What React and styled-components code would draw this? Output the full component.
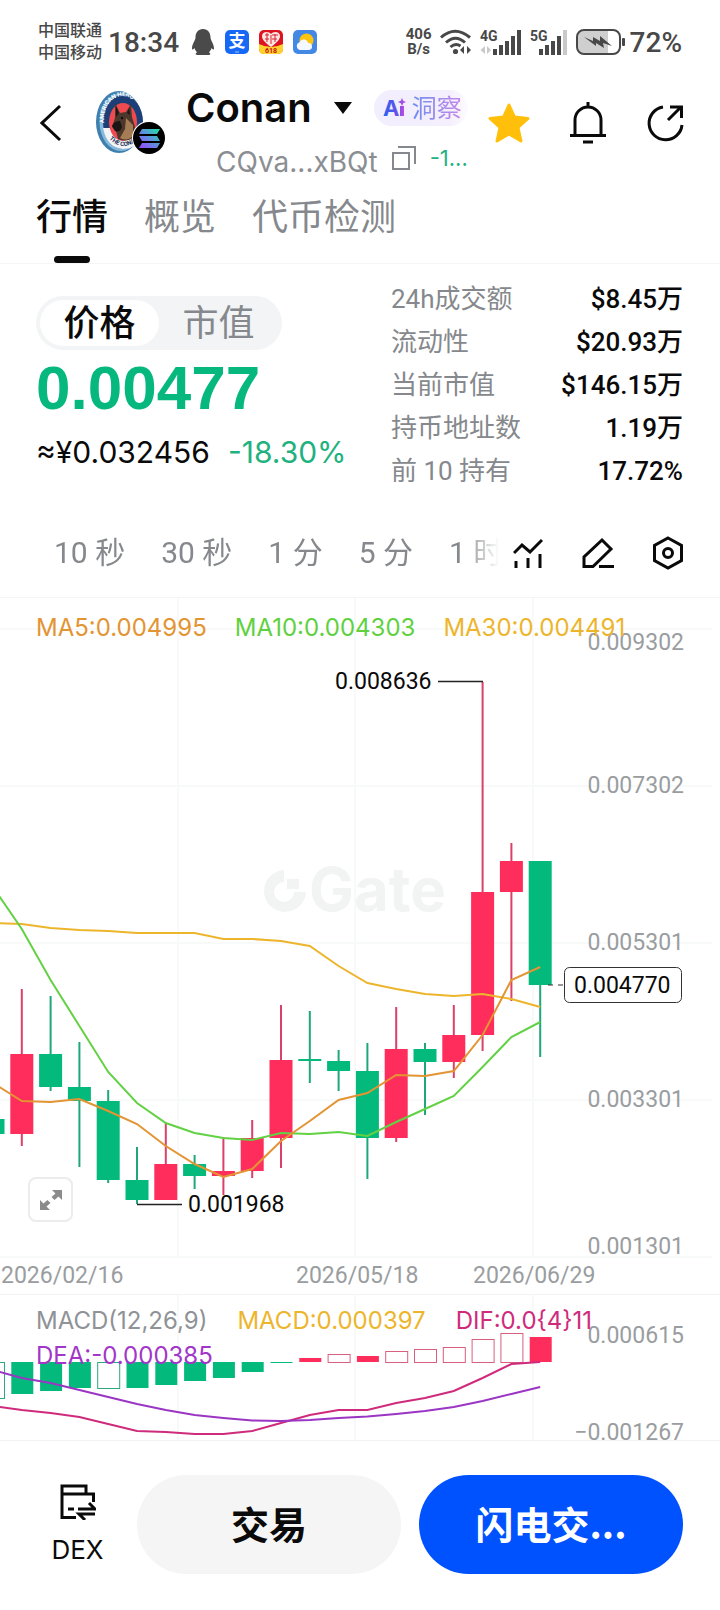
import React, { useState } from 'react';
import styled, { createGlobalStyle } from 'styled-components';

const candles = [
  { high: 521, top: 521, bottom: 536, low: 536, up: false },
  { high: 391, top: 456, bottom: 536, low: 548, up: true },
  { high: 398, top: 456, bottom: 489, low: 493, up: false },
  { high: 444, top: 489, bottom: 503, low: 569, up: false },
  { high: 492, top: 503, bottom: 582, low: 585, up: false },
  { high: 549, top: 582, bottom: 602, low: 606, up: false },
  { high: 525, top: 566, bottom: 602, low: 602, up: true },
  { high: 557, top: 566, bottom: 578, low: 591, up: false },
  { high: 539, top: 573, bottom: 578, low: 597, up: true },
  { high: 522, top: 540, bottom: 573, low: 580, up: true },
  { high: 407, top: 462, bottom: 540, low: 570, up: true },
  { high: 413, top: 461, bottom: 463, low: 485, up: false },
  { high: 452, top: 463, bottom: 473, low: 493, up: false },
  { high: 445, top: 473, bottom: 540, low: 581, up: false },
  { high: 409, top: 451, bottom: 540, low: 544, up: true },
  { high: 445, top: 451, bottom: 464, low: 517, up: false },
  { high: 407, top: 437, bottom: 464, low: 480, up: true },
  { high: 84, top: 294, bottom: 437, low: 453, up: true },
  { high: 245, top: 263, bottom: 294, low: 403, up: true },
  { high: 263, top: 263, bottom: 387, low: 459, up: false },
];

const averages = [
  { color: '#edb52c', points: [325, 326, 330, 332, 333, 335, 335, 335, 341, 341, 343, 348, 368, 385, 391, 396, 398, 396, 401, 409] },
  { color: '#62d143', points: [289, 331, 382, 428, 474, 505, 525, 535, 540, 542, 535, 536, 534, 538, 524, 511, 498, 469, 439, 424] },
  { color: '#e39433', points: [485, 503, 504, 501, 513, 526, 548, 566, 579, 571, 543, 523, 502, 495, 477, 478, 473, 437, 382, 369] },
];

const macdBars = [
  { y: 103, hollow: true }, { y: 99 }, { y: 96 }, { y: 93 }, { y: 93, hollow: true },
  { y: 93 }, { y: 90 }, { y: 86 }, { y: 83 }, { y: 77 }, { y: 68 },
  { y: 63 }, { y: 59, hollow: true }, { y: 61 }, { y: 56, hollow: true },
  { y: 54, hollow: true }, { y: 52, hollow: true }, { y: 44, hollow: true },
  { y: 38, hollow: true }, { y: 42 },
];

const macdLines = [
  { color: '#cf2b7c', points: [111, 115, 118, 122, 129, 136, 137, 139, 139, 136, 128, 120, 115, 115, 108, 103, 96, 83, 69, 67] },
  { color: '#9a35c4', points: [75, 83, 88, 95, 102, 109, 115, 120, 123, 125.5, 126, 125, 123, 121.5, 119, 116, 112, 106, 99, 92] },
];

const priceAxis = [
  { label: '0.009302', line: 31, text: 52 },
  { label: '0.007302', line: 188, text: 195 },
  { label: '0.005301', line: 345, text: 352 },
  { label: '0.003301', line: 502, text: 509 },
  { label: '0.001301', line: 659, text: 656 },
];

const stats = [
  { label: '24h成交额', value: '$8.45万' },
  { label: '流动性', value: '$20.93万' },
  { label: '当前市值', value: '$146.15万' },
  { label: '持币地址数', value: '1.19万' },
  { label: '前 10 持有', value: '17.72%' },
];

const columns = [178, 355, 533];
const tabs = ['行情', '概览', '代币检测'];
const frames = ['10 秒', '30 秒', '1 分', '5 分', '1 时'];

const xAt = (i) => -7 + i * 28.8;
const toPoints = (values) => values.map((y, i) => `${xAt(i)},${y}`).join(' ');

function StatusBar() {
  return (
    <Status>
      <Carriers>
        <span>中国联通</span>
        <span>中国移动</span>
      </Carriers>
      <Clock>18:34</Clock>
      <StatusApps>
        <svg width="24" height="28" viewBox="0 0 24 28" fill="#4a4a4a">
          <path d="M12 1C7 1 4.500 5 4.500 9.500C4.500 12 1 16 1 20.500C1 22 1.800 22 3.500 20C4 22 5 23.500 6.200 24.300C4.500 25 4 27 6 27H18C20 27 19.500 25 17.800 24.300C19 23.500 20 22 20.500 20C22.200 22 23 22 23 20.500C23 16 19.500 12 19.500 9.500C19.500 5 17 1 12 1Z" />
        </svg>
        <svg width="24" height="24" viewBox="0 0 24 24">
          <rect width="24" height="24" rx="5" fill="#1769f5" />
          <text x="12" y="17" fontSize="17" fontWeight="700" fill="#fff" textAnchor="middle">支</text>
          <path d="M10 22h4" stroke="#9cc4ff" strokeWidth="1" />
        </svg>
        <svg width="24" height="24" viewBox="0 0 24 24">
          <rect width="24" height="24" rx="5" fill="#dc1420" />
          <path d="M0 14Q12 20 24 14V19Q24 24 19 24H5Q0 24 0 19Z" fill="#ffd22e" />
          <path d="M12 17C5 12 3 9 3 6C3 1 10 1 12 4C14 1 21 1 21 6C21 9 19 12 12 17Z" fill="#ffe6e2" />
          <path d="M6 5h4M8 3v9M13 5h6M16 4v8M6 9h4M13 9h5M12 5v9" stroke="#d8202c" strokeWidth="1" />
          <text x="12" y="23" fontSize="7" fontWeight="700" fill="#c21219" textAnchor="middle">618</text>
        </svg>
        <svg width="24" height="24" viewBox="0 0 24 24">
          <rect width="24" height="24" rx="5" fill="#4488e6" />
          <circle cx="13.500" cy="10.500" r="7" fill="#ffc40f" />
          <path d="M7 20a4 4 0 0 1-.5-7.700A4.500 4.500 0 0 1 15 13a3.500 3.500 0 0 1 1 7Z" fill="#f4f8ff" />
        </svg>
      </StatusApps>
      <Signals>
        <NetSpeed>
          <span>406</span>
          <span>B/s</span>
        </NetSpeed>
        <svg width="32" height="26" viewBox="0 0 32 26" fill="none" stroke="#484848" strokeWidth="3">
          <path d="M1 8.500Q15 -4 30 8.500M6 13.500Q15.500 5 25 13.500M10.500 18Q15.500 13.500 20.500 17" />
          <circle cx="15.500" cy="22.500" r="2.600" fill="#484848" stroke="none" />
          <path d="M24 17v8l-4-4ZM27 17v8l4-4Z" fill="#484848" stroke="none" />
        </svg>
        <svg width="42" height="26" viewBox="0 0 42 26" fill="#484848">
          <text x="0" y="12" fontSize="14" fontWeight="700">4G</text>
          <path d="M5 17v8l-4.500-4ZM7 17v8l4-4Z" fill="#c9c9c9" />
          <path d="M13 20h4v6h-4ZM19 16h4v10h-4ZM25 12h4v14h-4ZM31 7h4v19h-4ZM37 1h4v25h-4Z" />
        </svg>
        <svg width="38" height="26" viewBox="0 0 38 26" fill="#484848">
          <text x="0" y="12" fontSize="14" fontWeight="700">5G</text>
          <path d="M9 20h4v6H9ZM15 16h4v10h-4ZM21 12h4v14h-4ZM27 7h4v19h-4Z" />
          <path d="M33 1h4v25h-4Z" fill="#c9c9c9" />
        </svg>
        <svg width="50" height="26" viewBox="0 0 50 26">
          <path d="M8 2h24v22H8q-6 0-6-6V8q0-6 6-6Z" fill="#cfcfcf" />
          <rect x="1" y="1" width="43" height="24" rx="7" fill="none" stroke="#484848" strokeWidth="2" />
          <rect x="46" y="9" width="3" height="8" rx="1" fill="#484848" />
          <path d="M8 8L17 12L17 8L24 12L24 7L36 17L27 14L28 19L20 14L20 17Z" fill="#484848" />
        </svg>
        <Battery>72%</Battery>
      </Signals>
    </Status>
  );
}

function TokenAvatar() {
  return (
    <svg width="70" height="64" viewBox="0 0 70 64">
      <defs>
        <linearGradient id="sol" x1="0" y1="1" x2="1" y2="0">
          <stop offset="0" stopColor="#9945ff" />
          <stop offset="0.500" stopColor="#5f8fe0" />
          <stop offset="1" stopColor="#19e6a0" />
        </linearGradient>
        <path id="rim" d="M10 43C3 18 15 5 27 5C38 5 48 20 45 44" />
        <path id="foot" d="M10 44Q26 65 45 46" />
      </defs>
      <ellipse cx="23" cy="31" rx="23" ry="31" fill="#3f7fae" />
      <ellipse cx="25" cy="31" rx="21.500" ry="29" fill="#86b9dc" />
      <ellipse cx="27" cy="31" rx="20" ry="27" fill="#1d3f77" />
      <path d="M7 37H47Q44 58 27 58Q11 57 7 37Z" fill="#f2f4f6" />
      <ellipse cx="27" cy="31" rx="14" ry="19" fill="#ee4a50" />
      <path d="M19 12L24 22L30 21L35 13L36 26L39 36L38 46Q31 52 22 48L20 40L16 36L19 27Z" fill="#4b372b" />
      <path d="M30 27L37 34L37 45Q31 51 24 47L29 38Z" fill="#a67c55" />
      <path d="M20 15L23 22L20 26ZM33 17L34 24L31 22Z" fill="#1e1714" />
      <path d="M16 35Q18 30 24 30L26 36Q24 42 19 40Z" fill="#1b1513" />
      <circle cx="26" cy="27" r="1.200" fill="#120d0b" />
      <AvatarText fill="#fff"><textPath href="#rim" startOffset="11">AMERICAN HERO</textPath></AvatarText>
      <AvatarText fill="#1d2f57"><textPath href="#foot" startOffset="5">THE CONAN</textPath></AvatarText>
      <circle cx="53" cy="47" r="17" fill="#fff" />
      <circle cx="53" cy="47" r="16" fill="#000" />
      <path d="M46 38h18l-3 5H43ZM43 45h18l3 5H46ZM46 52h18l-3 5H43Z" fill="url(#sol)" />
    </svg>
  );
}

function Header() {
  return (
    <TokenHeader>
      <BackButton aria-label="返回">
        <svg width="22" height="38" viewBox="0 0 22 38" fill="none" stroke="#0a0a0a" strokeWidth="3">
          <path d="M20 2L2 19L20 36" />
        </svg>
      </BackButton>
      <TokenAvatar />
      <TokenTitle>
        <NameRow>
          <TokenName>Conan</TokenName>
          <svg width="18" height="12" viewBox="0 0 18 12"><path d="M0 0H18L9 12Z" fill="#0a0a0a" /></svg>
          <InsightButton>
            <svg width="24" height="28" viewBox="0 0 24 28">
              <defs>
                <linearGradient id="ai" x1="0" y1="0" x2="24" y2="0" gradientUnits="userSpaceOnUse">
                  <stop offset="0" stopColor="#2563f0" />
                  <stop offset="0.600" stopColor="#6a50e8" />
                  <stop offset="1" stopColor="#e04be0" />
                </linearGradient>
              </defs>
              <text x="0" y="22" fontFamily="Inter" fontSize="22" fontWeight="700" fill="url(#ai)">A</text>
              <path d="M17 12h4v10h-4ZM19 4l1.200 2.800L23 8l-2.800 1.200L19 12l-1.200-2.800L15 8l2.800-1.200Z" fill="url(#ai)" />
            </svg>
            <InsightText>洞察</InsightText>
          </InsightButton>
        </NameRow>
        <AddressRow>
          <Address>CQva...xBQt</Address>
          <IconButton aria-label="复制地址">
            <svg width="24" height="32" viewBox="0 0 24 32" fill="none" stroke="#85888c" strokeWidth="2">
              <path d="M1 7H17V23H1ZM6 1H23V18" />
            </svg>
          </IconButton>
          <AgeText>-1...</AgeText>
        </AddressRow>
      </TokenTitle>
      <HeaderActions>
        <IconButton aria-label="收藏">
          <svg width="42" height="40" viewBox="0 0 42 40" fill="#ffbf0a" stroke="#ffbf0a" strokeWidth="3" strokeLinejoin="round">
            <path d="M21 2L26.500 14L40 15.500L30 24.500L33 38L21 31L9 38L12 24.500L2 15.500L15.500 14Z" />
          </svg>
        </IconButton>
        <IconButton aria-label="提醒">
          <svg width="36" height="42" viewBox="0 0 36 42" fill="none" stroke="#0a0a0a" strokeWidth="3">
            <path d="M5 33V18A13 13 0 0 1 31 18V33M0 33.500H36M18 0V5M13 40H23" />
          </svg>
        </IconButton>
        <IconButton aria-label="分享">
          <svg width="38" height="38" viewBox="0 0 38 38" fill="none" stroke="#0a0a0a" strokeWidth="3">
            <path d="M17 3A16.500 16.500 0 1 0 36 21M22 16L35 3M24 3H35.500V14" />
          </svg>
        </IconButton>
      </HeaderActions>
    </TokenHeader>
  );
}

function PriceChart() {
  return (
    <Panel>
      <Drawing viewBox="0 0 720 696">
        {priceAxis.map((tick) => (
          <GridLine key={tick.label} x1="0" x2="712" y1={tick.line} y2={tick.line} />
        ))}
        {columns.map((x) => (
          <GridLine key={x} x1={x} x2={x} y1="0" y2="659" />
        ))}
        <g fill="#f2f4f4">
          <path d="M284 272A21 21 0 1 0 306 294H294A10 10 0 1 1 284 284Z" />
          <path d="M287 281H299V291H287Z" />
          <Watermark x="309" y="313">Gate</Watermark>
        </g>
        {priceAxis.map((tick) => (
          <AxisText key={tick.label} x="684" y={tick.text} textAnchor="end">{tick.label}</AxisText>
        ))}
        {candles.map((c, i) => (
          <g key={i}>
            <path d={`M${xAt(i)} ${c.high}V${c.low}`} stroke={c.up ? '#db4068' : '#1fa67c'} strokeWidth="2" />
            <rect x={xAt(i) - 11.5} y={c.top} width="23" height={c.bottom - c.top} fill={c.up ? '#ff2d5b' : '#04b97c'} />
          </g>
        ))}
        {averages.map((line) => (
          <Curve key={line.color} points={toPoints(line.points)} stroke={line.color} />
        ))}
        <path d="M438 83.500H483M137 606.500H182" stroke="#222" strokeWidth="1.500" />
        <path d="M548 387H564" stroke="#333" strokeWidth="1" strokeDasharray="5 5" />
        <rect x="564.500" y="369.500" width="117" height="35" rx="5" fill="#fff" stroke="#333" />
        <MarkText x="574" y="395">0.004770</MarkText>
        <MarkText x="335" y="91">0.008636</MarkText>
        <MarkText x="188" y="614">0.001968</MarkText>
        <AxisText x="1" y="685">2026/02/16</AxisText>
        <AxisText x="296" y="685">2026/05/18</AxisText>
        <AxisText x="473" y="685">2026/06/29</AxisText>
      </Drawing>
      <Legend $top={12} $gap={28}>
        <LegendItem $color="#e39433">MA5:0.004995</LegendItem>
        <LegendItem $color="#5fd13f">MA10:0.004303</LegendItem>
        <LegendItem $color="#edb52c">MA30:0.004491</LegendItem>
      </Legend>
      <ExpandButton aria-label="全屏">
        <svg width="24" height="24" viewBox="0 0 24 24" fill="#8b8b8b">
          <path d="M13 2H23V12L19.500 8.500L15.500 12L12.500 9L16.500 5.500ZM1 12L4.500 15.500L8.500 12L11.500 15L7.500 18.500L11 22H1Z" />
        </svg>
      </ExpandButton>
    </Panel>
  );
}

function MacdChart() {
  return (
    <Panel>
      <Drawing viewBox="0 0 720 145">
        {columns.map((x) => (
          <GridLine key={x} x1={x} x2={x} y1="0" y2="145" />
        ))}
        {macdBars.map((bar, i) => {
          const up = bar.y < 67;
          const y = up ? bar.y : 67;
          const h = Math.max(Math.abs(bar.y - 67), 1);
          const color = up ? '#ff2d5b' : '#04b97c';
          return bar.hollow
            ? <rect key={i} x={xAt(i) - 10.5} y={y + 0.5} width="22" height={h} fill="#fff" stroke={up ? '#d8607e' : '#2aa982'} />
            : <rect key={i} x={xAt(i) - 10.5} y={y} width="22" height={h} fill={color} />;
        })}
        {macdLines.map((line) => (
          <Curve key={line.color} points={toPoints(line.points)} stroke={line.color} />
        ))}
        <AxisText x="684" y="48" textAnchor="end">0.000615</AxisText>
        <AxisText x="684" y="145" textAnchor="end">−0.001267</AxisText>
      </Drawing>
      <Legend $top={8} $gap={30}>
        <LegendItem $color="#8f9296">MACD(12,26,9)</LegendItem>
        <LegendItem $color="#edb52c">MACD:0.000397</LegendItem>
        <LegendItem $color="#cf2b7c">DIF:0.0{'{4}'}11</LegendItem>
        <LegendItem $color="#a236c8">DEA:-0.000385</LegendItem>
      </Legend>
    </Panel>
  );
}

function App() {
  const [tab, setTab] = useState('行情');
  const [mode, setMode] = useState('价格');

  return (
    <Page>
      <GlobalStyle />
      <StatusBar />
      <Header />
      <Tabs>
        {tabs.map((name) => (
          <Tab key={name} $active={name === tab} onClick={() => setTab(name)}>{name}</Tab>
        ))}
      </Tabs>
      <Summary>
        <PriceBlock>
          <Toggle>
            {['价格', '市值'].map((name) => (
              <ToggleButton key={name} $active={name === mode} onClick={() => setMode(name)}>{name}</ToggleButton>
            ))}
          </Toggle>
          <Price>0.00477</Price>
          <PriceNote>
            <span>≈¥0.032456</span>
            <Change>-18.30%</Change>
          </PriceNote>
        </PriceBlock>
        <Stats>
          {stats.map((item) => (
            <StatRow key={item.label}>
              <dt>{item.label}</dt>
              <dd>{item.value}</dd>
            </StatRow>
          ))}
        </Stats>
      </Summary>
      <Toolbar>
        <Frames>
          {frames.map((name) => <FrameButton key={name}>{name}</FrameButton>)}
        </Frames>
        <ToolIcons>
          <IconButton aria-label="指标">
            <svg width="30" height="30" viewBox="0 0 30 30" fill="none" stroke="#0a0a0a" strokeWidth="3">
              <path d="M1 15L9 7L17 14L29 2M3 23V30M15 20V30M27 16V30" />
            </svg>
          </IconButton>
          <IconButton aria-label="画线">
            <svg width="32" height="32" viewBox="0 0 32 32" fill="none" stroke="#0a0a0a" strokeWidth="3">
              <path d="M2 29.500V20L20 3L29 12L11 29.500ZM17 29.500H32" />
            </svg>
          </IconButton>
          <IconButton aria-label="设置">
            <svg width="30" height="34" viewBox="0 0 30 34" fill="none" stroke="#0a0a0a" strokeWidth="3">
              <path d="M15 2L28.500 9.500V24.500L15 32L1.500 24.500V9.500Z" />
              <circle cx="15" cy="17" r="4.500" />
            </svg>
          </IconButton>
        </ToolIcons>
      </Toolbar>
      <PriceChart />
      <MacdChart />
      <BottomBar>
        <DexLink href="#dex">
          <svg width="36" height="36" viewBox="0 0 36 36" fill="none" stroke="#0a0a0a" strokeWidth="3">
            <path d="M16 33.500H2V2H26V9M2 10H33.500V18M8 25H14M18 25H35L29 19M35 30H19L25 36" />
          </svg>
          DEX
        </DexLink>
        <TradeButton>交易</TradeButton>
        <TradeButton $primary>闪电交...</TradeButton>
      </BottomBar>
    </Page>
  );
}

export default App;

const sans = `Inter, "Noto Sans CJK SC", sans-serif`;
const digits = `Roboto, "Noto Sans CJK SC", sans-serif`;

const GlobalStyle = createGlobalStyle`
  * {
    box-sizing: border-box;
  }
  body {
    margin: 0;
    background: #fff;
    color: #0a0a0a;
    font-family: ${sans};
  }
  button {
    padding: 0;
    border: 0;
    background: none;
    color: inherit;
    font: inherit;
    white-space: nowrap;
    cursor: pointer;
  }
  svg {
    flex: none;
  }
`;

const Page = styled.main`
  width: 100%;
  overflow: hidden;
`;

const Status = styled.div`
  display: flex;
  align-items: center;
  height: 84px;
  padding: 0 38px;
  color: #484848;
  font-family: ${digits};
`;

const Carriers = styled.div`
  display: flex;
  flex-direction: column;
  font-size: 16px;
  line-height: 22px;
  font-weight: 500;
`;

const Clock = styled.span`
  margin-left: 6px;
  font-size: 28px;
  font-weight: 500;
`;

const StatusApps = styled.div`
  display: flex;
  align-items: center;
  gap: 10px;
  margin-left: 12px;
`;

const Signals = styled.div`
  display: flex;
  align-items: center;
  gap: 8px;
  margin-left: auto;
`;

const NetSpeed = styled.div`
  display: flex;
  flex-direction: column;
  align-items: center;
  font-size: 15px;
  line-height: 15px;
  font-weight: 700;
`;

const Battery = styled.span`
  font-size: 28px;
  font-weight: 500;
  margin-left: -4px;
`;

const TokenHeader = styled.header`
  display: flex;
  align-items: center;
  height: 100px;
  padding: 0 36px 22px 40px;
`;

const IconButton = styled.button`
  display: flex;
  align-items: center;
  justify-content: center;
`;

const BackButton = styled(IconButton)`
  margin-right: 34px;
`;

const AvatarText = styled.text`
  font-family: ${digits};
  font-size: 6px;
  font-weight: 700;
`;

const TokenTitle = styled.div`
  display: flex;
  flex-direction: column;
  align-self: flex-start;
  align-items: flex-end;
  gap: 6px;
  margin-left: 20px;
`;

const NameRow = styled.div`
  display: flex;
  align-items: center;
  gap: 22px;
`;

const TokenName = styled.h1`
  margin: 0;
  font-size: 40px;
  line-height: 48px;
  font-weight: 600;
`;

const InsightButton = styled.button`
  display: flex;
  align-items: center;
  gap: 5px;
  height: 36px;
  padding: 0 6px 0 9px;
  border-radius: 18px;
  background: linear-gradient(90deg, #f1eefe, #f5effd 80%, #fdfbff);
`;

const InsightText = styled.span`
  font-size: 25px;
  line-height: 36px;
  color: transparent;
  background: linear-gradient(90deg, #6d8ff0, #c887e8);
  background-clip: text;
`;

const AddressRow = styled.div`
  display: flex;
  align-items: center;
  gap: 14px;
`;

const Address = styled.span`
  font-size: 28px;
  line-height: 48px;
  color: #8b8e92;
`;

const AgeText = styled.span`
  font-size: 22px;
  line-height: 40px;
  margin-bottom: 8px;
  color: #1fb27f;
`;

const HeaderActions = styled.div`
  display: flex;
  align-items: center;
  gap: 40px;
  margin-left: auto;
`;

const Tabs = styled.nav`
  display: flex;
  gap: 36px;
  height: 80px;
  padding: 0 36px;
  border-bottom: 1px solid #f4f5f5;
`;

const Tab = styled.button`
  display: flex;
  flex-direction: column;
  align-items: center;
  justify-content: space-between;
  font-size: 36px;
  line-height: 66px;
  font-weight: ${(props) => (props.$active ? 500 : 400)};
  color: ${(props) => (props.$active ? '#0a0a0a' : '#85888c')};

  &::after {
    content: '';
    width: 36px;
    height: 7px;
    border-radius: 4px;
    background: ${(props) => (props.$active ? '#0a0a0a' : 'transparent')};
  }
`;

const Summary = styled.section`
  display: flex;
  justify-content: space-between;
  height: 242px;
  padding: 0 37px 0 36px;
`;

const PriceBlock = styled.div`
  display: flex;
  flex-direction: column;
  align-items: flex-start;
  padding-top: 32px;
`;

const Toggle = styled.div`
  display: flex;
  height: 54px;
  padding: 4px;
  border-radius: 27px;
  background: #f2f4f5;
`;

const ToggleButton = styled.button`
  width: 119px;
  border-radius: 23px;
  font-size: 36px;
  line-height: 44px;
  font-weight: ${(props) => (props.$active ? 500 : 400)};
  color: ${(props) => (props.$active ? '#0a0a0a' : '#85888c')};
  background: ${(props) => (props.$active ? '#fff' : 'transparent')};
`;

const Price = styled.strong`
  font-family: "Liberation Sans", sans-serif;
  font-size: 62px;
  line-height: 76px;
  color: #07b87e;
`;

const PriceNote = styled.div`
  display: flex;
  gap: 18px;
  font-size: 30px;
  line-height: 52px;
`;

const Change = styled.span`
  color: #1fb27f;
`;

const Stats = styled.dl`
  width: 292px;
  margin: 0;
  padding-top: 14px;
`;

const StatRow = styled.div`
  display: flex;
  justify-content: space-between;
  font-family: ${digits};
  font-size: 26px;
  line-height: 43px;

  dt {
    color: #85888c;
  }
  dd {
    margin: 0;
    font-weight: 500;
  }
`;

const Toolbar = styled.div`
  display: flex;
  align-items: center;
  height: 92px;
  padding: 2px 37px 0 54px;
  border-bottom: 1px solid #f4f5f5;
`;

const Frames = styled.div`
  display: flex;
  flex: 1;
  min-width: 0;
  gap: 36px;
  overflow: hidden;
  mask-image: linear-gradient(90deg, #000 92%, transparent);
`;

const FrameButton = styled.button`
  flex: none;
  font-family: ${digits};
  font-size: 30px;
  line-height: 44px;
  color: #85888c;
`;

const ToolIcons = styled.div`
  display: flex;
  align-items: center;
  gap: 39px;
  margin-left: 14px;
`;

const Panel = styled.section`
  position: relative;
  border-bottom: 1px solid #f1f2f2;
`;

const Drawing = styled.svg`
  display: block;
  width: 100%;
  height: auto;
`;

const GridLine = styled.line`
  stroke: #f8f9f9;
  stroke-width: 2;
`;

const Curve = styled.polyline`
  fill: none;
  stroke-width: 2;
`;

const AxisText = styled.text`
  font-family: ${digits};
  font-size: 23px;
  fill: #9a9d9f;
`;

const MarkText = styled(AxisText)`
  fill: #0a0a0a;
`;

const Watermark = styled.text`
  font-size: 60px;
  font-weight: 700;
`;

const Legend = styled.div`
  position: absolute;
  top: ${(props) => props.$top}px;
  left: 36px;
  right: 36px;
  display: flex;
  flex-wrap: wrap;
  column-gap: ${(props) => props.$gap}px;
`;

const LegendItem = styled.span`
  font-size: 24px;
  line-height: 35px;
  color: ${(props) => props.$color};
`;

const ExpandButton = styled.button`
  position: absolute;
  left: 28px;
  bottom: 72px;
  display: flex;
  align-items: center;
  justify-content: center;
  width: 45px;
  height: 45px;
  border: 2px solid #ececec;
  border-radius: 8px;
  background: #fff;
`;

const BottomBar = styled.footer`
  display: flex;
  align-items: center;
  gap: 18px;
  padding: 34px 37px 36px 36px;
`;

const DexLink = styled.a`
  display: flex;
  flex-direction: column;
  align-items: center;
  gap: 14px;
  width: 83px;
  font-size: 26px;
  line-height: 32px;
  color: #0a0a0a;
  text-decoration: none;
`;

const TradeButton = styled.button`
  flex: 1;
  height: 99px;
  padding-bottom: 4px;
  border-radius: 50px;
  font-family: "Noto Sans CJK SC", sans-serif;
  font-size: 38px;
  font-weight: 700;
  color: ${(props) => (props.$primary ? '#fff' : '#0a0a0a')};
  background: ${(props) => (props.$primary ? '#0052ff' : '#f5f5f5')};
`;
